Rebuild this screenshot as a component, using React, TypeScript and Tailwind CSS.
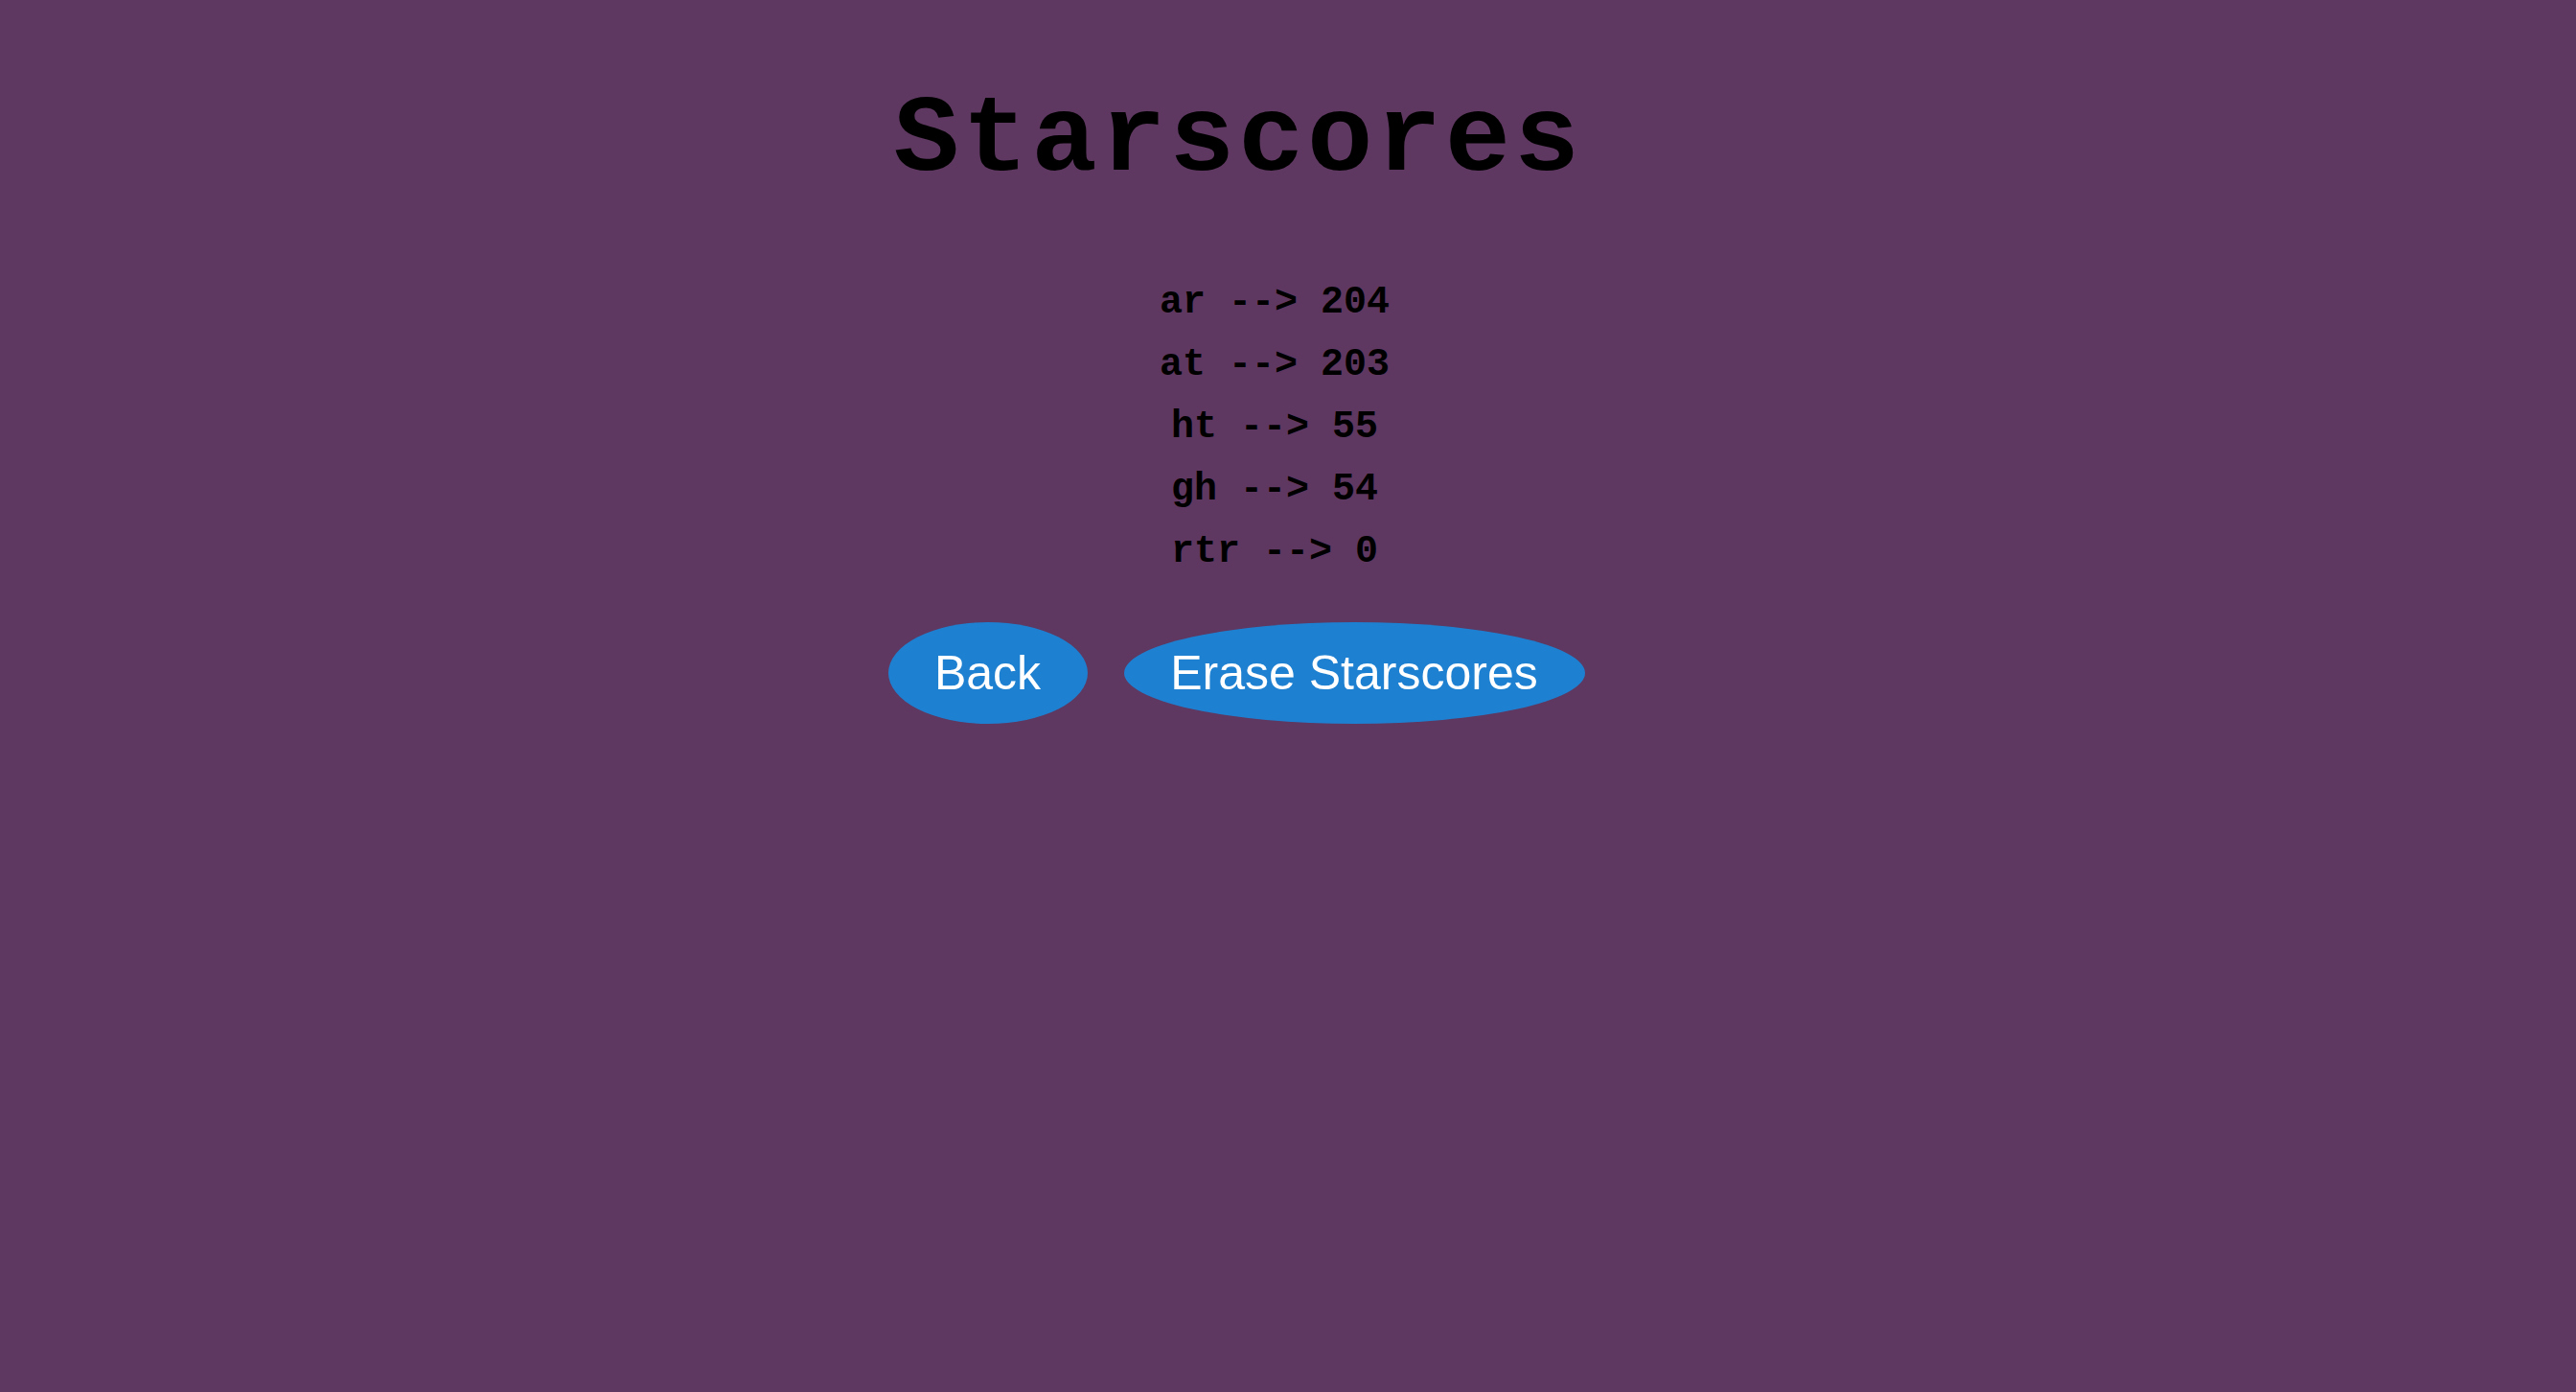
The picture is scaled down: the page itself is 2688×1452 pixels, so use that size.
import React from "react";

const scores: [string, number][] = [
  ["ar", 204],
  ["at", 203],
  ["ht", 55],
  ["gh", 54],
  ["rtr", 0],
];

export default function App() {
  return (
    <div className="min-h-screen w-full bg-[#5e3860] flex flex-col items-center">
      <div className="pr-[104px] pt-[90px]">
        <h1
          className="text-[114px] leading-none font-bold text-black whitespace-pre tracking-[3.5px]"
          style={{ fontFamily: '"Liberation Mono", "Courier New", monospace' }}
        >
          Starscores
        </h1>
      </div>
      <div
        className="pr-[28px] mt-[79px] flex flex-col items-center text-[40px] leading-[65px] font-bold text-black"
        style={{ fontFamily: '"Liberation Mono", "Courier New", monospace' }}
      >
        {scores.map(([k, v]) => (
          <div key={k} className="whitespace-pre">
            {k} --&gt; {v}
          </div>
        ))}
      </div>
      <div
        className="pr-[108px] mt-[41px] flex flex-row gap-[38px]"
        style={{ fontFamily: '"Liberation Sans", Arial, sans-serif' }}
      >
        <button className="w-[208px] h-[106px] rounded-[50%] bg-[#1e80d1] text-white text-[50px] leading-none flex items-center justify-center">
          Back
        </button>
        <button className="w-[481px] h-[106px] rounded-[50%] bg-[#1e80d1] text-white text-[50px] leading-none flex items-center justify-center">
          Erase Starscores
        </button>
      </div>
    </div>
  );
}
